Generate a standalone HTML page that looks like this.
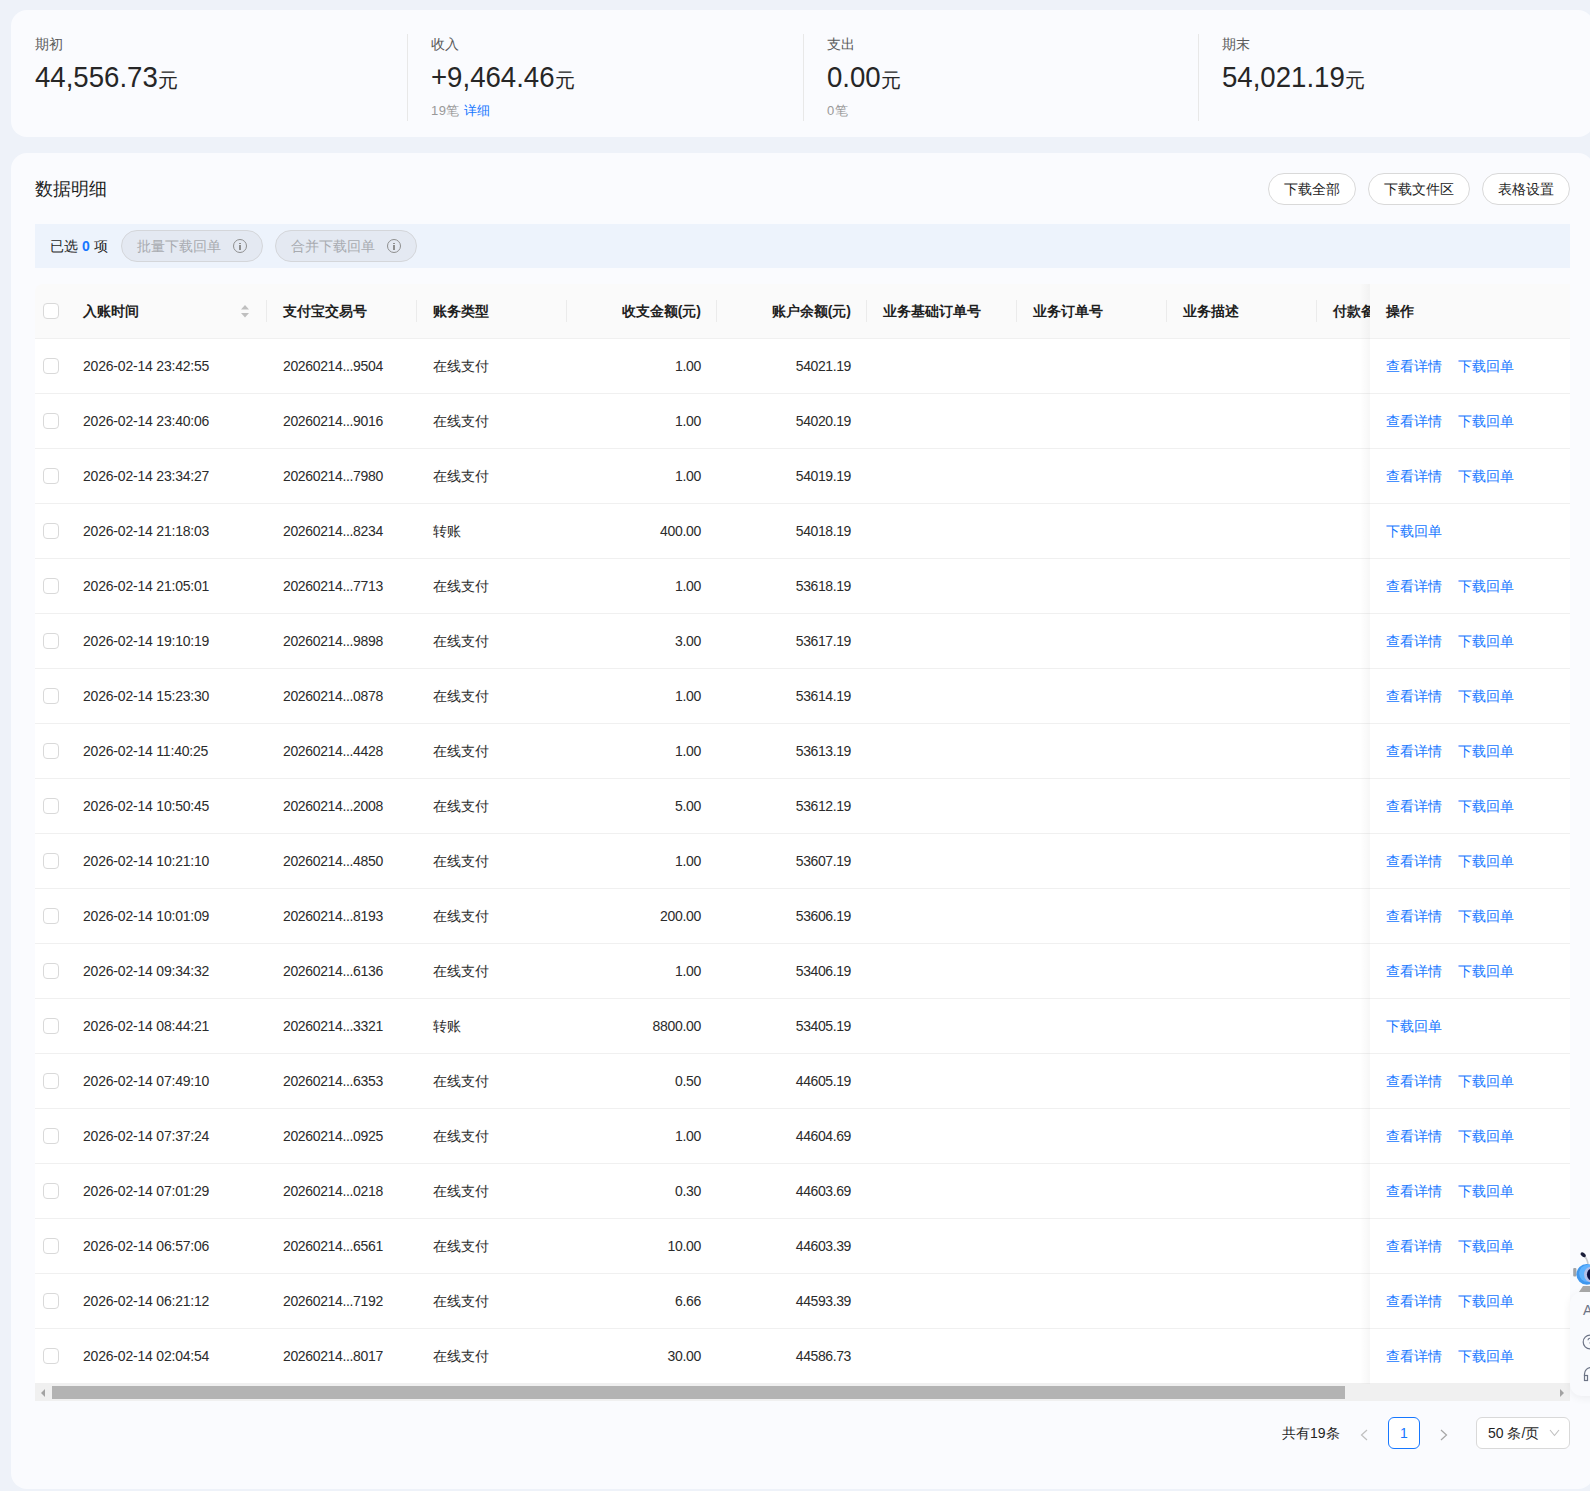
<!DOCTYPE html>
<html><head><meta charset="utf-8"><style>
*{box-sizing:border-box;margin:0;padding:0}
html,body{width:1590px;height:1491px;overflow:hidden}
body{background:#eef2f9;font-family:"Liberation Sans",sans-serif;color:#1f1f1f;position:relative;font-size:14px;line-height:22px}
.card{position:absolute;left:11px;width:1583px;background:#fafbfe;border-radius:16px}
#c1{top:10px;height:127px}
#c2{top:153px;height:1336px}
.abs{position:absolute;white-space:nowrap}
.lbl{font-size:14px;line-height:22px;color:#595959}
.num{font-size:30px;line-height:34px;color:#262626}
.num em{font-style:normal;display:inline-block;transform:scaleX(0.92);transform-origin:0 0}
.num small{font-size:20px;letter-spacing:0}
.sub{font-size:13px;line-height:20px;color:#999;letter-spacing:0.4px}
.sub b{font-weight:normal;color:#1677ff}
.div{position:absolute;top:34px;width:1px;height:87px;background:#e8e8e8}
.title{font-size:18px;line-height:26px;color:#1f1f1f}
.btn{position:absolute;top:173px;height:32px;border:1px solid #d9d9d9;border-radius:16px;background:#fff;font-size:14px;line-height:30px;text-align:center;color:#1f1f1f}
.selbar{position:absolute;left:35px;top:224px;width:1535px;height:44px;background:#edf3fc}
.pill{position:absolute;top:230px;height:32px;width:142px;border:1px solid #d4d6da;border-radius:16px;background:#e4e9f2;color:#a8abb0;font-size:14px;line-height:30px;padding-left:15px}
.info{position:absolute;top:8px;right:15px;width:14px;height:14px;border:1.3px solid #8f8f8f;border-radius:50%}
.info:before{content:"";position:absolute;left:5px;top:2.5px;width:1.6px;height:1.6px;background:#8f8f8f}
.info:after{content:"";position:absolute;left:5px;top:5px;width:1.6px;height:5px;background:#8f8f8f}
.thead{position:absolute;left:35px;top:284px;width:1535px;height:55px;background:#fafafa;border-bottom:1px solid #f0f0f0;border-radius:8px 8px 0 0;font-weight:bold}
.thead span{position:absolute;top:16px;white-space:nowrap}
.sep{position:absolute;top:16px;width:1px;height:22px;background:#ebebeb}
.tbody{position:absolute;left:35px;top:339px;width:1535px;height:1045px;background:#fff;overflow:hidden}
.row{position:absolute;left:35px;width:1535px;height:55px;border-bottom:1px solid #f0f0f0;background:#fff}
.row span{position:absolute;top:16px;white-space:nowrap;color:#2b2b2b}
.cb{position:absolute;left:8px;top:19px;width:16px;height:16px;border:1px solid #d9d9d9;border-radius:4px;background:#fff}
.c1{left:48px;letter-spacing:-0.2px}.c2{left:248px;letter-spacing:-0.35px}.c3{left:398px}
.c4{right:869px;letter-spacing:-0.3px}.c5{right:719px;letter-spacing:-0.4px}
.fx{position:absolute;left:1335px;top:0;width:200px;height:54px;background:#fff}
.fx a{position:absolute;top:16px;color:#1677ff;white-space:nowrap}
.l1{left:16px}.l2{left:88px}
.shadow{position:absolute;left:1360px;top:284px;width:10px;height:1100px;background:linear-gradient(to right,rgba(0,0,0,0),rgba(0,0,0,0.03))}
.sbar{position:absolute;left:35px;top:1384px;width:1535px;height:17px;background:#f0f0f0}
.thumb{position:absolute;left:17px;top:2px;width:1293px;height:13px;background:#b3b3b3}
.arr{position:absolute;top:5px;width:0;height:0;border-top:4px solid transparent;border-bottom:4px solid transparent}

.panel{position:absolute;left:1570px;top:1292px;width:40px;height:104px;background:#f9fafd;border-radius:12px;box-shadow:0 2px 8px rgba(0,0,0,0.06)}

</style></head><body>
<div class="card" id="c1"></div>
<div class="card" id="c2"></div>
<div class="abs lbl" style="left:35px;top:33px">期初</div>
<div class="abs num" style="left:35px;top:60px"><em style="margin-right:-10.7px">44,556.73</em><small>元</small></div>
<div class="div" style="left:407px"></div>
<div class="abs lbl" style="left:431px;top:33px">收入</div>
<div class="abs num" style="left:431px;top:60px"><em style="margin-right:-10.7px">+9,464.46</em><small>元</small></div>
<div class="abs sub" style="left:431px;top:101px">19笔 <b>详细</b></div>
<div class="div" style="left:803px"></div>
<div class="abs lbl" style="left:827px;top:33px">支出</div>
<div class="abs num" style="left:827px;top:60px"><em style="margin-right:-4.7px">0.00</em><small>元</small></div>
<div class="abs sub" style="left:827px;top:101px">0笔</div>
<div class="div" style="left:1198px"></div>
<div class="abs lbl" style="left:1222px;top:33px">期末</div>
<div class="abs num" style="left:1222px;top:60px"><em style="margin-right:-10.7px">54,021.19</em><small>元</small></div>

<div class="abs title" style="left:35px;top:176px">数据明细</div>
<div class="btn" style="left:1268px;width:88px">下载全部</div>
<div class="btn" style="left:1368px;width:102px">下载文件区</div>
<div class="btn" style="left:1482px;width:88px">表格设置</div>

<div class="selbar"></div>
<div class="abs" style="left:50px;top:235px;font-size:14px">已选 <b style="color:#1677ff">0</b> 项</div>
<div class="pill" style="left:121px">批量下载回单<i class="info"></i></div>
<div class="pill" style="left:275px">合并下载回单<i class="info"></i></div>

<div class="thead">
<i class="cb" style="top:19px"></i>
<span style="left:48px">入账时间</span>
<svg style="position:absolute;left:205px;top:20px" width="10" height="15" viewBox="0 0 10 15"><path d="M1 5.5L5 1L9 5.5Z" fill="#bfbfbf"/><path d="M1 9L5 13.5L9 9Z" fill="#bfbfbf"/></svg>
<i class="sep" style="left:231px"></i>
<span style="left:248px">支付宝交易号</span>
<i class="sep" style="left:381px"></i>
<span style="left:398px">账务类型</span>
<i class="sep" style="left:531px"></i>
<span style="right:869px">收支金额(元)</span>
<i class="sep" style="left:681px"></i>
<span style="right:719px">账户余额(元)</span>
<i class="sep" style="left:831px"></i>
<span style="left:848px">业务基础订单号</span>
<i class="sep" style="left:981px"></i>
<span style="left:998px">业务订单号</span>
<i class="sep" style="left:1131px"></i>
<span style="left:1148px">业务描述</span>
<i class="sep" style="left:1281px"></i>
<span style="left:1298px">付款备注</span>
<div style="position:absolute;left:1335px;top:0;width:200px;height:54px;background:#fafafa"><span style="left:16px">操作</span></div>
</div>
<div class="row" style="top:339px"><i class="cb"></i><span class="c1">2026-02-14 23:42:55</span><span class="c2">20260214...9504</span><span class="c3">在线支付</span><span class="c4">1.00</span><span class="c5">54021.19</span><div class="fx"><a class="l1">查看详情</a><a class="l2">下载回单</a></div></div>
<div class="row" style="top:394px"><i class="cb"></i><span class="c1">2026-02-14 23:40:06</span><span class="c2">20260214...9016</span><span class="c3">在线支付</span><span class="c4">1.00</span><span class="c5">54020.19</span><div class="fx"><a class="l1">查看详情</a><a class="l2">下载回单</a></div></div>
<div class="row" style="top:449px"><i class="cb"></i><span class="c1">2026-02-14 23:34:27</span><span class="c2">20260214...7980</span><span class="c3">在线支付</span><span class="c4">1.00</span><span class="c5">54019.19</span><div class="fx"><a class="l1">查看详情</a><a class="l2">下载回单</a></div></div>
<div class="row" style="top:504px"><i class="cb"></i><span class="c1">2026-02-14 21:18:03</span><span class="c2">20260214...8234</span><span class="c3">转账</span><span class="c4">400.00</span><span class="c5">54018.19</span><div class="fx"><a class="l1">下载回单</a></div></div>
<div class="row" style="top:559px"><i class="cb"></i><span class="c1">2026-02-14 21:05:01</span><span class="c2">20260214...7713</span><span class="c3">在线支付</span><span class="c4">1.00</span><span class="c5">53618.19</span><div class="fx"><a class="l1">查看详情</a><a class="l2">下载回单</a></div></div>
<div class="row" style="top:614px"><i class="cb"></i><span class="c1">2026-02-14 19:10:19</span><span class="c2">20260214...9898</span><span class="c3">在线支付</span><span class="c4">3.00</span><span class="c5">53617.19</span><div class="fx"><a class="l1">查看详情</a><a class="l2">下载回单</a></div></div>
<div class="row" style="top:669px"><i class="cb"></i><span class="c1">2026-02-14 15:23:30</span><span class="c2">20260214...0878</span><span class="c3">在线支付</span><span class="c4">1.00</span><span class="c5">53614.19</span><div class="fx"><a class="l1">查看详情</a><a class="l2">下载回单</a></div></div>
<div class="row" style="top:724px"><i class="cb"></i><span class="c1">2026-02-14 11:40:25</span><span class="c2">20260214...4428</span><span class="c3">在线支付</span><span class="c4">1.00</span><span class="c5">53613.19</span><div class="fx"><a class="l1">查看详情</a><a class="l2">下载回单</a></div></div>
<div class="row" style="top:779px"><i class="cb"></i><span class="c1">2026-02-14 10:50:45</span><span class="c2">20260214...2008</span><span class="c3">在线支付</span><span class="c4">5.00</span><span class="c5">53612.19</span><div class="fx"><a class="l1">查看详情</a><a class="l2">下载回单</a></div></div>
<div class="row" style="top:834px"><i class="cb"></i><span class="c1">2026-02-14 10:21:10</span><span class="c2">20260214...4850</span><span class="c3">在线支付</span><span class="c4">1.00</span><span class="c5">53607.19</span><div class="fx"><a class="l1">查看详情</a><a class="l2">下载回单</a></div></div>
<div class="row" style="top:889px"><i class="cb"></i><span class="c1">2026-02-14 10:01:09</span><span class="c2">20260214...8193</span><span class="c3">在线支付</span><span class="c4">200.00</span><span class="c5">53606.19</span><div class="fx"><a class="l1">查看详情</a><a class="l2">下载回单</a></div></div>
<div class="row" style="top:944px"><i class="cb"></i><span class="c1">2026-02-14 09:34:32</span><span class="c2">20260214...6136</span><span class="c3">在线支付</span><span class="c4">1.00</span><span class="c5">53406.19</span><div class="fx"><a class="l1">查看详情</a><a class="l2">下载回单</a></div></div>
<div class="row" style="top:999px"><i class="cb"></i><span class="c1">2026-02-14 08:44:21</span><span class="c2">20260214...3321</span><span class="c3">转账</span><span class="c4">8800.00</span><span class="c5">53405.19</span><div class="fx"><a class="l1">下载回单</a></div></div>
<div class="row" style="top:1054px"><i class="cb"></i><span class="c1">2026-02-14 07:49:10</span><span class="c2">20260214...6353</span><span class="c3">在线支付</span><span class="c4">0.50</span><span class="c5">44605.19</span><div class="fx"><a class="l1">查看详情</a><a class="l2">下载回单</a></div></div>
<div class="row" style="top:1109px"><i class="cb"></i><span class="c1">2026-02-14 07:37:24</span><span class="c2">20260214...0925</span><span class="c3">在线支付</span><span class="c4">1.00</span><span class="c5">44604.69</span><div class="fx"><a class="l1">查看详情</a><a class="l2">下载回单</a></div></div>
<div class="row" style="top:1164px"><i class="cb"></i><span class="c1">2026-02-14 07:01:29</span><span class="c2">20260214...0218</span><span class="c3">在线支付</span><span class="c4">0.30</span><span class="c5">44603.69</span><div class="fx"><a class="l1">查看详情</a><a class="l2">下载回单</a></div></div>
<div class="row" style="top:1219px"><i class="cb"></i><span class="c1">2026-02-14 06:57:06</span><span class="c2">20260214...6561</span><span class="c3">在线支付</span><span class="c4">10.00</span><span class="c5">44603.39</span><div class="fx"><a class="l1">查看详情</a><a class="l2">下载回单</a></div></div>
<div class="row" style="top:1274px"><i class="cb"></i><span class="c1">2026-02-14 06:21:12</span><span class="c2">20260214...7192</span><span class="c3">在线支付</span><span class="c4">6.66</span><span class="c5">44593.39</span><div class="fx"><a class="l1">查看详情</a><a class="l2">下载回单</a></div></div>
<div class="row" style="top:1329px"><i class="cb"></i><span class="c1">2026-02-14 02:04:54</span><span class="c2">20260214...8017</span><span class="c3">在线支付</span><span class="c4">30.00</span><span class="c5">44586.73</span><div class="fx"><a class="l1">查看详情</a><a class="l2">下载回单</a></div></div>
<div class="shadow"></div>
<div class="sbar"><i class="arr" style="left:6px;border-right:4px solid #a3a3a3"></i><div class="thumb"></div><i class="arr" style="right:6px;border-left:4px solid #a3a3a3"></i></div>

<div class="abs" style="left:1282px;top:1422px">共有19条</div>
<svg class="abs" style="left:1358px;top:1429px" width="12" height="12" viewBox="0 0 12 12"><path d="M9 1L3.5 6L9 11" fill="none" stroke="#bfbfbf" stroke-width="1.2"/></svg>
<div class="abs" style="left:1388px;top:1417px;width:32px;height:32px;border:1px solid #1677ff;border-radius:6px;color:#1677ff;text-align:center;line-height:30px;background:#fff">1</div>
<svg class="abs" style="left:1438px;top:1429px" width="12" height="12" viewBox="0 0 12 12"><path d="M3 1L8.5 6L3 11" fill="none" stroke="#a6a6a6" stroke-width="1.2"/></svg>
<div class="abs" style="left:1476px;top:1417px;width:94px;height:32px;border:1px solid #d9d9d9;border-radius:6px;background:#fff;line-height:30px;padding-left:11px">50 条/页<svg style="position:absolute;left:72px;top:11px" width="11" height="8" viewBox="0 0 11 8"><path d="M1 1L5.5 6.5L10 1" fill="none" stroke="#bfbfbf" stroke-width="1.1"/></svg></div>

<svg class="abs" style="left:1572px;top:1250px" width="30" height="44" viewBox="0 0 30 44">
<path d="M12 6 Q15 8 16 14" fill="none" stroke="#c8cbd0" stroke-width="1.6"/>
<ellipse cx="11.2" cy="4.8" rx="3" ry="1.9" fill="#1a1e3a" transform="rotate(35 11.2 4.8)"/>
<rect x="1.2" y="18" width="3.2" height="8.5" rx="1" fill="#9ea3a8"/>
<circle cx="14.8" cy="24.4" r="10.4" fill="#3f97ee"/>
<circle cx="15.8" cy="23.4" r="8.6" fill="#5fb2ff"/>
<circle cx="20" cy="24.5" r="8" fill="#b4bfe8"/>
<circle cx="21.5" cy="24.5" r="6.6" fill="#0d1040"/>
<path d="M7 42 L11 36 L28 36 L30 42 Z" fill="#a8a8a8"/>
</svg>
<div class="panel"></div>
<div class="abs" style="left:1583px;top:1299px;font-size:14px;color:#6c7385">A</div>
<svg class="abs" style="left:1582px;top:1334px" width="16" height="16" viewBox="0 0 16 16"><circle cx="8" cy="8" r="6.8" fill="none" stroke="#6c7385" stroke-width="1.2"/><path d="M6 6.3a2 2 0 1 1 2.8 1.8c-.6.3-.8.7-.8 1.3" fill="none" stroke="#6c7385" stroke-width="1.1"/></svg>
<svg class="abs" style="left:1583px;top:1367px" width="16" height="16" viewBox="0 0 16 16"><path d="M1.5 9V7a6.5 6.5 0 0 1 13 0v2" fill="none" stroke="#6c7385" stroke-width="1.2"/><rect x="1.5" y="8.5" width="3" height="5" fill="none" stroke="#6c7385" stroke-width="1.2"/></svg>

</body></html>
